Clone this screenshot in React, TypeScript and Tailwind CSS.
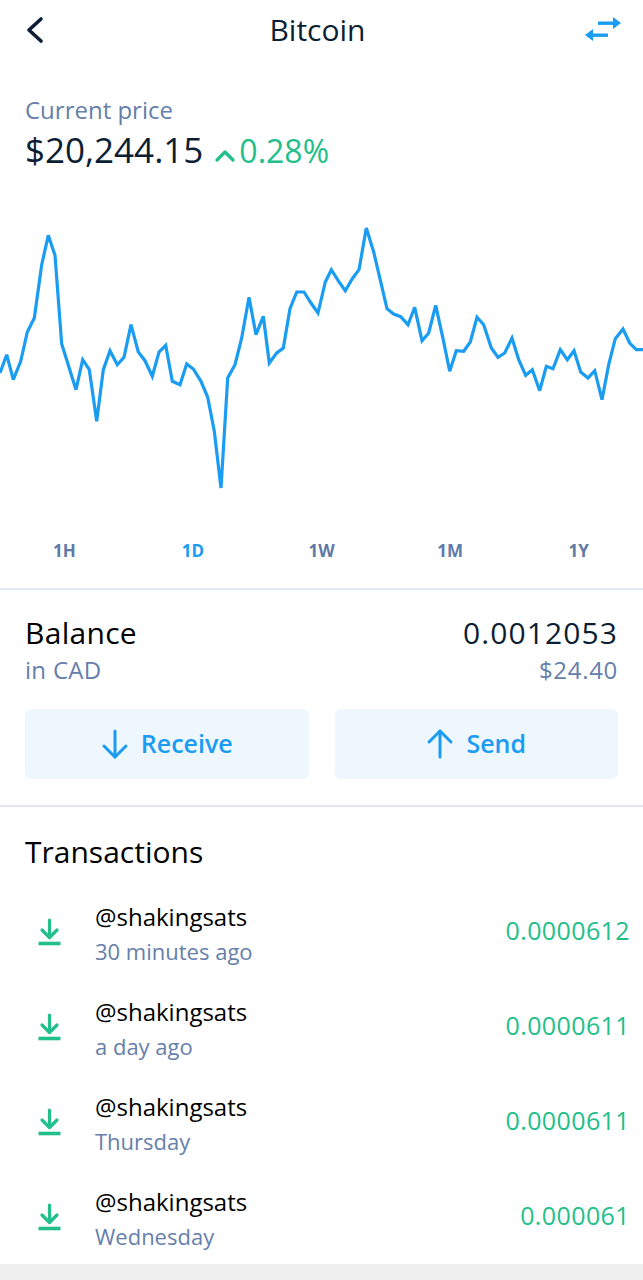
const pts: [number, number][] = [
  [0, 375], [6.7, 356.7], [13.3, 381.7], [20.7, 363.3], [27.3, 334], [34.3, 320], [41.7, 266.7],
  [48.3, 237.3], [55, 257.3], [61.7, 346], [76, 391.7], [82.7, 361.7], [89.3, 371.7], [96.7, 423.3],
  [103.3, 371.7], [110, 352.7], [117.3, 366.7], [124, 359.3], [131, 326.7], [138.3, 354], [145, 362.7],
  [152.3, 378.3], [159, 354], [165.7, 347.3], [172.3, 383.3], [180, 386.7], [186.7, 366], [193.3, 371],
  [201, 383.3], [207.7, 399.3], [214.3, 433.3], [221, 490], [227.7, 380], [235, 366.7], [241.7, 340],
  [249, 299.3], [256, 336.7], [263.3, 318.3], [269.3, 365], [276.7, 355], [283.3, 350], [290, 310.7],
  [296.7, 294], [304, 294], [311, 305], [318, 315], [325.3, 284], [331.3, 271.7], [338.7, 283.3],
  [345.3, 292.7], [352.3, 280.7], [359, 271.7], [366.3, 230], [373.7, 254], [387, 310.7], [393.7, 316],
  [400.7, 318.7], [408, 326.7], [414.7, 309.3], [422, 342.7], [428.7, 335], [435.7, 307.3], [443, 340.7],
  [449.7, 373.3], [456.3, 352.7], [463.7, 353.3], [470.3, 344], [477, 319.3], [483.7, 326.7], [491.3, 350],
  [498, 359.3], [504.7, 355], [512, 340], [518.7, 361.7], [525.7, 377.3], [532.3, 371.7], [539.7, 392.7],
  [546.3, 368.3], [553, 370.7], [560.3, 351.7], [567.3, 361.7], [574, 352.7], [580.7, 374], [588, 380],
  [594.7, 372.7], [602, 401.7], [608.7, 366.7], [615.3, 340.7], [623, 331], [629.7, 345], [636.3, 351.7],
  [643, 351.7],
]

const txs = [
  { when: '30 minutes ago', amount: '0.0000612' },
  { when: 'a day ago', amount: '0.0000611' },
  { when: 'Thursday', amount: '0.0000611' },
  { when: 'Wednesday', amount: '0.000061' },
]

const ranges = ['1H', '1D', '1W', '1M', '1Y']

function DownloadIcon() {
  return (
    <svg width="26" height="28" viewBox="0 0 26 28" fill="none" stroke="#22bf8a" strokeWidth="3.2" strokeLinecap="round" strokeLinejoin="round">
      <path d="M12.5 2v17" />
      <path d="M5 12l7.5 7.5L20 12" />
      <path d="M1.5 25.5h22" strokeLinecap="butt" strokeWidth="3.6" />
    </svg>
  )
}

export default function App() {
  const line = pts.map(([x, y]) => `${x},${y}`).join(' ')
  return (
    <div className="w-[643px] h-[1280px] bg-white overflow-hidden font-['Open_Sans',sans-serif] text-[#0c1e33]">
      <header className="h-[60px] flex items-center justify-between px-[25px]">
        <svg width="20" height="28" viewBox="0 0 20 28" fill="none" stroke="#0c1e33" strokeWidth="3.6" strokeLinecap="round" strokeLinejoin="round">
          <path d="M16 3L4 14l12 11" />
        </svg>
        <h1 className="text-[30px] leading-none font-medium ml-[6px]">Bitcoin</h1>
        <svg width="38" height="28" viewBox="0 0 38 28" fill="#1a9cf2" className="mr-[-4px]">
          <rect x="14" y="5.5" width="16" height="3.4" />
          <path d="M29 1l8 6-8 6z" />
          <rect x="8" y="17.5" width="16" height="3.4" />
          <path d="M9 13l-8 6 8 6z" />
        </svg>
      </header>

      <section className="px-[25px] pt-[36px]">
        <p className="text-[24px] leading-[28px] text-[#6680ab]">Current price</p>
        <div className="flex items-baseline mt-[6px] h-[40px]">
          <span className="text-[35px] leading-[40px]">$20,244.15</span>
          <span className="ml-[10px] flex items-baseline text-[32px] leading-[40px] text-[#22bf8a]">
            <svg width="24" height="16" viewBox="0 0 24 16" fill="none" stroke="#22bf8a" strokeWidth="3.2" strokeLinecap="round" strokeLinejoin="round" className="mr-[2px]">
              <path d="M4 13l8-8 8 8" />
            </svg>
            0.28%
          </span>
        </div>
      </section>

      <svg width="643" height="360" viewBox="0 172 643 360" className="block">
        <polyline points={line} fill="none" stroke="#1a9cf2" strokeWidth="3.2" strokeLinejoin="miter" strokeMiterlimit="3" />
      </svg>

      <div className="grid grid-cols-5 h-[42px] items-center">
        {ranges.map((r) => (
          <span key={r} className={`text-center text-[17px] font-bold ${r === '1D' ? 'text-[#1a9cf2]' : 'text-[#5f7aa6]'}`}>
            {r}
          </span>
        ))}
      </div>

      <div className="mt-[16px] h-[2px] bg-[#e1e7f3]" />

      <section className="px-[25px] pt-[25px]">
        <div className="flex justify-between">
          <div>
            <p className="text-[30px] leading-[36px] text-black tracking-[0.3px]">Balance</p>
            <p className="mt-[5px] text-[24px] leading-[28px] text-[#6680ab] tracking-[0.3px]">in CAD</p>
          </div>
          <div className="text-right">
            <p className="text-[30px] leading-[36px] tracking-[1.1px]">0.0012053</p>
            <p className="mt-[5px] text-[24px] leading-[28px] text-[#6680ab] tracking-[0.7px]">$24.40</p>
          </div>
        </div>
        <div className="mt-[25px] grid grid-cols-2 gap-[26px]">
          <button className="h-[70px] rounded-[6px] bg-[#eef6fe] flex items-center justify-center gap-[12px] text-[#1a9cf2]">
            <svg width="28" height="32" viewBox="0 0 28 32" fill="none" stroke="#1a9cf2" strokeWidth="3" strokeLinecap="round" strokeLinejoin="round">
              <path d="M14 3v26" />
              <path d="M3 18l11 11 11-11" />
            </svg>
            <span className="text-[25px] font-semibold">Receive</span>
          </button>
          <button className="h-[70px] rounded-[6px] bg-[#eef6fe] flex items-center justify-center gap-[12px] text-[#1a9cf2]">
            <svg width="28" height="32" viewBox="0 0 28 32" fill="none" stroke="#1a9cf2" strokeWidth="3" strokeLinecap="round" strokeLinejoin="round">
              <path d="M14 29V3" />
              <path d="M3 14L14 3l11 11" />
            </svg>
            <span className="text-[25px] font-semibold">Send</span>
          </button>
        </div>
      </section>

      <div className="mt-[26px] h-[2px] bg-[#e1e7f3]" />

      <section className="pl-[25px] pr-[13px] pt-[27px]">
        <h2 className="text-[30px] leading-[36px] text-black">Transactions</h2>
        <ul className="mt-[32px] flex flex-col gap-[27px]">
          {txs.map((t, i) => (
            <li key={i} className="h-[68px] flex">
              <div className="w-[70px] pl-[12px] pt-[16px]">
                <DownloadIcon />
              </div>
              <div className="flex-1">
                <p className="text-[24px] leading-[30px] text-black">@shakingsats</p>
                <p className="mt-[5px] text-[22px] leading-[28px] text-[#6680ab]">{t.when}</p>
              </div>
              <p className="pt-[13px] text-[25px] leading-[30px] tracking-[0.4px] text-[#22bf8a]">{t.amount}</p>
            </li>
          ))}
        </ul>
      </section>

      <div className="mt-[9px] h-[20px] bg-[#efefef]" />
    </div>
  )
}
